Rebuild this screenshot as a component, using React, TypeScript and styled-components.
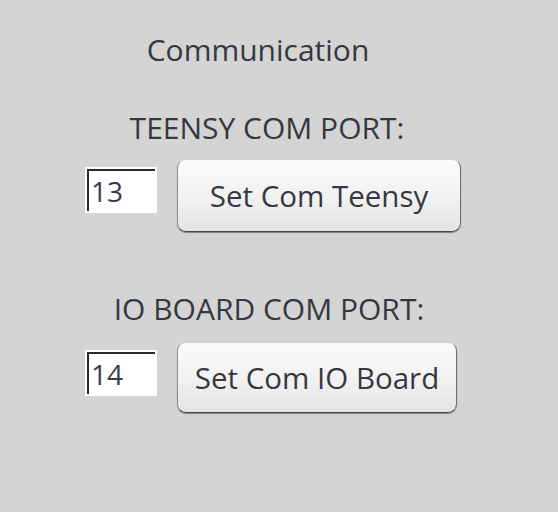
import React, { useState } from 'react'
import styled, { createGlobalStyle } from 'styled-components'

const GlobalStyle = createGlobalStyle`
  html, body {
    margin: 0;
    background: #d4d4d4;
  }
  body {
    font-family: "Open Sans", "Noto Sans", sans-serif;
    color: #363840;
  }
`

const Page = styled.div`
  width: 558px;
  height: 512px;
  overflow: hidden;
  background: #d4d4d4;
`

const Panel = styled.div`
  display: flex;
  flex-direction: column;
  width: 376px;
  margin-left: 85px;
  padding-top: 30px;
`

const Title = styled.div<{ $shift: number; $top: number }>`
  align-self: center;
  margin-top: ${p => p.$top}px;
  margin-right: ${p => p.$shift}px;
  font-size: 30px;
  line-height: 40px;
  white-space: nowrap;
`

const Row = styled.div<{ $top: number }>`
  display: flex;
  align-items: flex-start;
  gap: 20px;
  margin-top: ${p => p.$top}px;
`

const PortInput = styled.input`
  box-sizing: border-box;
  width: 72px;
  height: 46px;
  margin: 8px 0 0;
  padding: 2px 0 0 4px;
  border: 2px solid #fff;
  background: #fff;
  box-shadow: inset 2px 2px 0 #2a2a2a;
  font-family: inherit;
  font-size: 28px;
  color: #3a3d4c;
  outline: none;
`

const SetButton = styled.button<{ $width: number; $height: number }>`
  box-sizing: border-box;
  width: ${p => p.$width}px;
  height: ${p => p.$height}px;
  border: 1px solid;
  border-color: #cfcfcf #6e6e6e #474747 #8e8e8e;
  border-radius: 9px;
  background: linear-gradient(#fbfbfb, #f1f1f1 55%, #e4e4e4);
  box-shadow: 0 1px 1px rgba(0, 0, 0, 0.4);
  font-family: inherit;
  font-size: 29.5px;
  color: #363840;
  cursor: pointer;
`

function PortRow({ label, initial, button, width, height, shift, top, rowTop }: {
  label: string
  initial: string
  button: string
  width: number
  height: number
  shift: number
  top: number
  rowTop: number
}) {
  const [port, setPort] = useState(initial)
  return (
    <>
      <Title $shift={shift} $top={top}>{label}</Title>
      <Row $top={rowTop}>
        <PortInput value={port} onChange={e => setPort(e.target.value)} />
        <SetButton $width={width} $height={height}>{button}</SetButton>
      </Row>
    </>
  )
}

export default function App() {
  return (
    <Page>
      <GlobalStyle />
      <Panel>
        <Title $shift={30} $top={0}>Communication</Title>
        <PortRow label="TEENSY COM PORT:" initial="13" button="Set Com Teensy"
          width={285} height={73} shift={12} top={38} rowTop={11} />
        <PortRow label="IO BOARD COM PORT:" initial="14" button="Set Com IO Board"
          width={280} height={71} shift={8} top={57} rowTop={13} />
      </Panel>
    </Page>
  )
}
